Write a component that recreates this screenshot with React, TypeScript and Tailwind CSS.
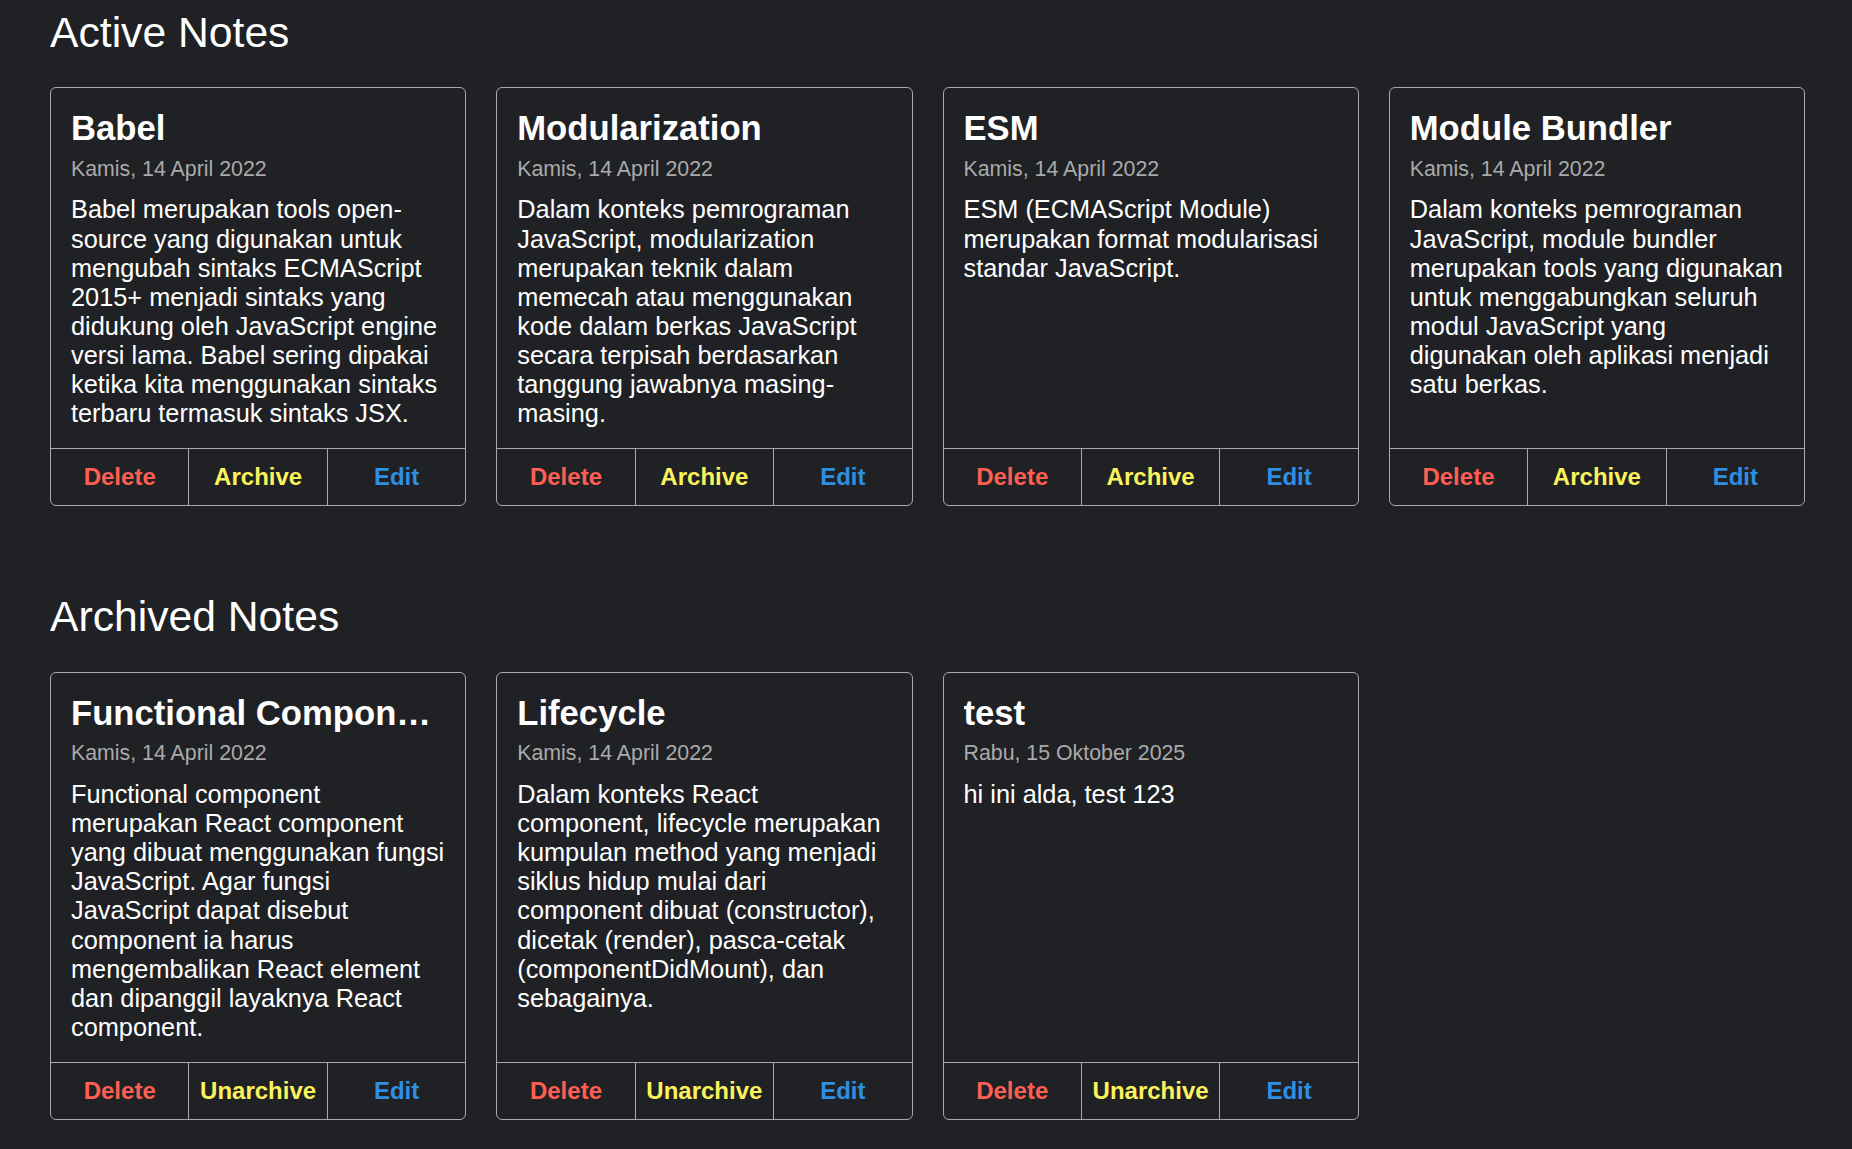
type Note = {
  id: number;
  title: string;
  date: string;
  body: string;
};

const activeNotes: Note[] = [
  {
    id: 1,
    title: "Babel",
    date: "Kamis, 14 April 2022",
    body: "Babel merupakan tools open-source yang digunakan untuk mengubah sintaks ECMAScript 2015+ menjadi sintaks yang didukung oleh JavaScript engine versi lama. Babel sering dipakai ketika kita menggunakan sintaks terbaru termasuk sintaks JSX.",
  },
  {
    id: 2,
    title: "Modularization",
    date: "Kamis, 14 April 2022",
    body: "Dalam konteks pemrograman JavaScript, modularization merupakan teknik dalam memecah atau menggunakan kode dalam berkas JavaScript secara terpisah berdasarkan tanggung jawabnya masing-masing.",
  },
  {
    id: 3,
    title: "ESM",
    date: "Kamis, 14 April 2022",
    body: "ESM (ECMAScript Module) merupakan format modularisasi standar JavaScript.",
  },
  {
    id: 4,
    title: "Module Bundler",
    date: "Kamis, 14 April 2022",
    body: "Dalam konteks pemrograman JavaScript, module bundler merupakan tools yang digunakan untuk menggabungkan seluruh modul JavaScript yang digunakan oleh aplikasi menjadi satu berkas.",
  },
];

const archivedNotes: Note[] = [
  {
    id: 5,
    title: "Functional Component",
    date: "Kamis, 14 April 2022",
    body: "Functional component merupakan React component yang dibuat menggunakan fungsi JavaScript. Agar fungsi JavaScript dapat disebut component ia harus mengembalikan React element dan dipanggil layaknya React component.",
  },
  {
    id: 6,
    title: "Lifecycle",
    date: "Kamis, 14 April 2022",
    body: "Dalam konteks React component, lifecycle merupakan kumpulan method yang menjadi siklus hidup mulai dari component dibuat (constructor), dicetak (render), pasca-cetak (componentDidMount), dan sebagainya.",
  },
  {
    id: 7,
    title: "test",
    date: "Rabu, 15 Oktober 2025",
    body: "hi ini alda, test 123",
  },
];

function NoteItem({ note, archived }: { note: Note; archived: boolean }) {
  return (
    <div className="flex flex-col border border-[#aaa] rounded-[6px] overflow-hidden">
      <div className="flex-1 px-[20px] pt-[21px] pb-[20px]">
        <h3 className="text-[34.67px] font-bold leading-[1.15] truncate">{note.title}</h3>
        <p className="mt-[8px] text-[21.33px] leading-[1.15] text-[#aaa]">{note.date}</p>
        <p className="mt-[14px] text-[25.33px] leading-[1.15]">{note.body}</p>
      </div>
      <div className="flex border-t border-[#aaa]">
        <button className="flex-1 h-[56px] text-[24px] font-bold text-[#ff5f52]">Delete</button>
        <button className="flex-1 h-[56px] text-[24px] font-bold text-[#fbf35c] border-l border-[#aaa]">
          {archived ? "Unarchive" : "Archive"}
        </button>
        <button className="flex-1 h-[56px] text-[24px] font-bold text-[#2f8fe2] border-l border-[#aaa]">Edit</button>
      </div>
    </div>
  );
}

export default function App() {
  return (
    <div
      className="min-h-screen bg-[#202124] text-white pl-[50px] pr-[47px] pt-[8px] pb-[30px]"
      style={{ fontFamily: '"Liberation Sans", Arial, sans-serif' }}
    >
      <h2 className="text-[42.67px] leading-[1.15]">Active Notes</h2>
      <div className="grid grid-cols-4 gap-[30px] mt-[30px]">
        {activeNotes.map((note) => (
          <NoteItem key={note.id} note={note} archived={false} />
        ))}
      </div>

      <h2 className="text-[42.67px] leading-[1.15] mt-[86px]">Archived Notes</h2>
      <div className="grid grid-cols-4 gap-[30px] mt-[30px]">
        {archivedNotes.map((note) => (
          <NoteItem key={note.id} note={note} archived={true} />
        ))}
      </div>
    </div>
  );
}
